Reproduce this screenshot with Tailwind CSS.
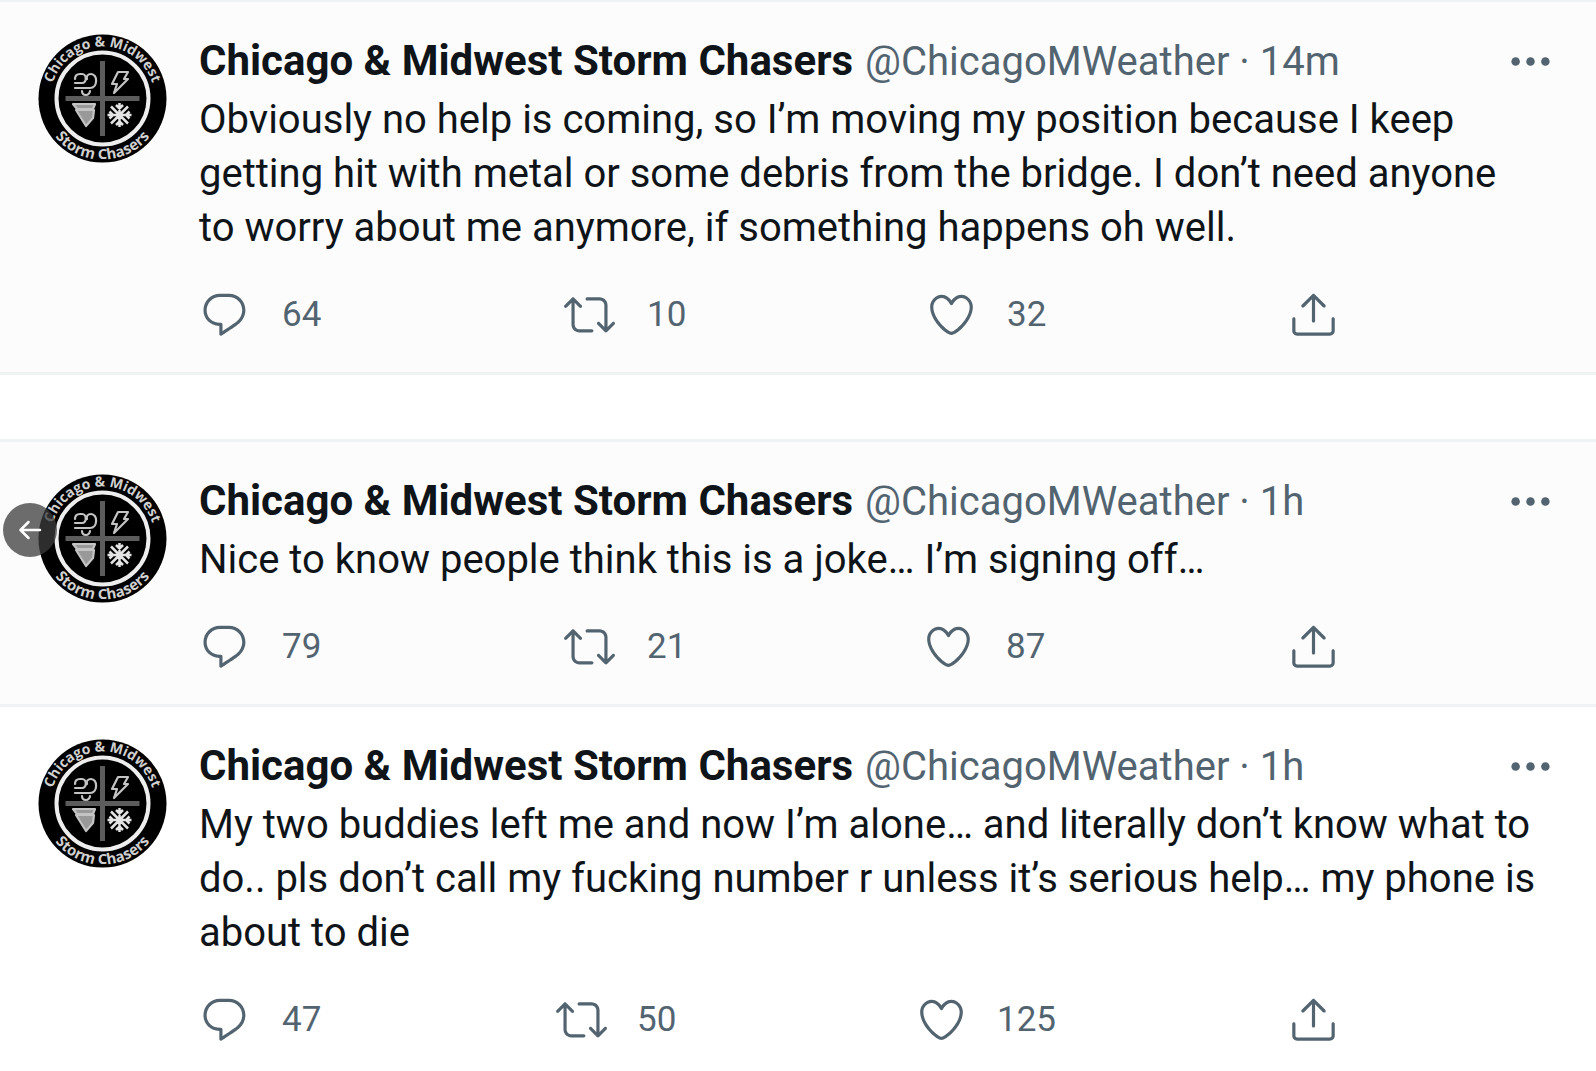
<!DOCTYPE html>
<html lang="en">
<head>
<meta charset="utf-8">
<meta name="viewport" content="width=device-width, initial-scale=1">
<title>Chicago &amp; Midwest Storm Chasers</title>
<script src="https://cdn.jsdelivr.net/npm/@tailwindcss/browser@4"></script>
</head>
<body class="relative bg-white font-['Roboto','Liberation_Sans',sans-serif] text-[40px] leading-[54px] text-[#0f1419]">

<svg class="hidden" aria-hidden="true">
  <defs>
    <path id="arc-top" d="M12.5 64.5a52 52 0 0 1 104 0"/>
    <path id="arc-bottom" d="M3.5 64.5a61 61 0 0 0 122 0"/>
    <symbol id="avatar" viewBox="0 0 129 129">
      <circle cx="64.5" cy="64.5" r="64" fill="#000"/>
      <circle cx="64.5" cy="64.5" r="46" fill="none" stroke="#eee" stroke-width="4"/>
      <path d="M64.5 27v75M27.500 64.500h74" stroke="#5c5c5c" stroke-width="5" fill="none"/>
      <g fill="none" stroke="#c4c4c4" stroke-width="2.200" stroke-linecap="round" stroke-linejoin="round">
        <path d="M37 49h7c5 0 5-9 0-9h-2c-3 0-5 2-5 5M37 54h15c8 0 8-14 1-14-3 0-5 2-4 5M44 57c0 3 2 4 4 4s4-2 4-4"/>
        <path d="M80 38h10l-4 7h4L76 59l3-9h-5z"/>
        <path d="M35 70h22l-2 5H39zM38 76l10 16 7-8 1-8z" fill="#999"/>
      </g>
      <path d="M81.500 69v24M69.500 81h24M73 72.500l17 17M90 72.500l-17 17M78 71l3.500 3.500 3.500-3.500M78 91l3.500-3.500 3.500 3.500M71.500 77.500l3.500 3.500-3.500 3.500M91.500 77.500l-3.500 3.500 3.500 3.500" fill="none" stroke="#e4e4e4" stroke-width="2.500"/>
      <g fill="#d0d0d0" font-family="'Open Sans',sans-serif" font-weight="700" text-anchor="middle">
        <text font-size="14"><textPath href="#arc-top" startOffset="50%">Chicago &amp; Midwest</textPath></text>
        <text font-size="15"><textPath href="#arc-bottom" startOffset="50%">Storm Chasers</textPath></text>
      </g>
    </symbol>
    <symbol id="reply" viewBox="0 0 24 24"><path d="M14.046 2.242l-4.148-.01h-.002c-4.374 0-7.800 3.427-7.800 7.802 0 4.098 3.186 7.206 7.465 7.370v3.828c0 .108.044.286.120.403.142.225.384.347.632.347.138 0 .277-.038.402-.118.264-.168 6.473-4.140 8.088-5.506 1.902-1.610 3.040-3.970 3.043-6.312v-.017c-.006-4.367-3.430-7.787-7.800-7.788zm3.787 12.972c-1.134.960-4.862 3.405-6.772 4.643V16.670c0-.414-.335-.750-.750-.750h-.396c-3.660 0-6.318-2.476-6.318-5.886 0-3.534 2.768-6.302 6.300-6.302l4.147.010h.002c3.532 0 6.300 2.766 6.302 6.296-.003 1.910-.942 3.844-2.514 5.176z"/></symbol>
    <symbol id="retweet" viewBox="0 0 24 24"><path d="M23.770 15.670c-.292-.293-.767-.293-1.060 0l-2.220 2.220V7.650c0-2.068-1.683-3.750-3.750-3.750h-5.850c-.414 0-.750.336-.750.750s.336.750.750.750h5.850c1.240 0 2.250 1.010 2.250 2.250v10.240l-2.220-2.220c-.293-.293-.768-.293-1.060 0s-.294.768 0 1.060l3.500 3.500c.145.147.337.220.530.220s.383-.072.530-.220l3.500-3.500c.294-.292.294-.767 0-1.060zm-10.660 3.280H7.260c-1.240 0-2.250-1.010-2.250-2.250V6.460l2.220 2.220c.148.147.340.220.532.220s.384-.073.530-.220c.293-.293.293-.768 0-1.060l-3.500-3.500c-.293-.294-.768-.294-1.060 0l-3.500 3.500c-.294.292-.294.767 0 1.060s.767.293 1.060 0l2.220-2.220V16.700c0 2.068 1.683 3.750 3.750 3.750h5.850c.414 0 .750-.336.750-.750s-.337-.750-.750-.750z"/></symbol>
    <symbol id="like" viewBox="0 0 24 24"><path d="M12 21.638h-.014C9.403 21.590 1.950 14.856 1.950 8.478c0-3.064 2.525-5.754 5.403-5.754 2.290 0 3.830 1.580 4.646 2.730.814-1.148 2.354-2.730 4.645-2.730 2.880 0 5.404 2.690 5.404 5.755 0 6.376-7.454 13.110-10.037 13.157H12zM7.354 4.225c-2.080 0-3.903 1.988-3.903 4.255 0 5.740 7.034 11.596 8.550 11.658 1.518-.062 8.550-5.917 8.550-11.658 0-2.267-1.823-4.255-3.903-4.255-2.528 0-3.940 2.936-3.952 2.965-.230.562-1.156.562-1.387 0-.014-.030-1.425-2.965-3.954-2.965z"/></symbol>
    <symbol id="share" viewBox="0 0 24 24"><path d="M17.530 7.470l-5-5c-.293-.293-.768-.293-1.060 0l-5 5c-.294.293-.294.768 0 1.060s.767.294 1.060 0l3.720-3.720V15c0 .414.336.750.750.750s.750-.336.750-.750V4.810l3.720 3.720c.146.147.338.220.530.220s.384-.072.530-.220c.293-.293.293-.767 0-1.060z"/><path d="M19.708 21.944H4.292C3.028 21.944 2 20.916 2 19.652V14c0-.414.336-.750.750-.750s.750.336.750.750v5.652c0 .437.355.792.792.792h15.416c.437 0 .792-.355.792-.792V14c0-.414.336-.750.750-.750s.750.336.750.750v5.652c0 1.264-1.028 2.292-2.292 2.292z"/></symbol>
    <symbol id="more" viewBox="0 0 24 24"><circle cx="5" cy="12" r="2"/><circle cx="12" cy="12" r="2"/><circle cx="19" cy="12" r="2"/></symbol>
  </defs>
</svg>

<main>
  <article class="flex gap-8 border-t-2 border-b-3 border-[#eff3f4] bg-[#fcfcfc] pr-10 pl-[38px] pt-8 pb-8">
    <a href="#" aria-label="Profile" class="shrink-0"><svg class="size-[129px]"><use href="#avatar"/></svg></a>
    <div class="min-w-0 flex-1">
      <header class="mb-1 flex items-center justify-between">
        <div class="flex items-baseline gap-3 whitespace-nowrap">
          <a href="#" class="text-[42px] font-bold">Chicago &amp; Midwest Storm Chasers</a>
          <span class="text-[#536471]"><a href="#">@ChicagoMWeather</a> · <a href="#"><time>14m</time></a></span>
        </div>
        <button type="button" aria-label="More" class="text-[#536471]"><svg class="size-[51px] fill-current"><use href="#more"/></svg></button>
      </header>
      <p>Obviously no help is coming, so I’m moving my position because I keep<br>getting hit with metal or some debris from the bridge. I don’t need anyone<br>to worry about me anymore, if something happens oh well.</p>
      <div class="mt-[34px] grid max-w-[1140px] grid-cols-[365fr_362fr_362fr_51px] text-[35px] leading-[51px] text-[#536471]">
        <button type="button" aria-label="Reply" class="flex gap-8"><svg class="size-[51px] fill-current"><use href="#reply"/></svg><span>64</span></button>
        <button type="button" aria-label="Retweet" class="flex gap-8"><svg class="size-[51px] fill-current"><use href="#retweet"/></svg><span>10</span></button>
        <button type="button" aria-label="Like" class="flex gap-[30px]"><svg class="size-[51px] fill-current"><use href="#like"/></svg><span>32</span></button>
        <button type="button" aria-label="Share"><svg class="size-[51px] fill-current"><use href="#share"/></svg></button>
      </div>
    </div>
  </article>

  <article class="mt-16 flex gap-8 border-y-3 border-[#eff3f4] bg-[#fcfcfc] pr-10 pl-[38px] pt-8 pb-8">
    <a href="#" aria-label="Profile" class="shrink-0"><svg class="size-[129px]"><use href="#avatar"/></svg></a>
    <div class="min-w-0 flex-1">
      <header class="mb-1 flex items-center justify-between">
        <div class="flex items-baseline gap-3 whitespace-nowrap">
          <a href="#" class="text-[42px] font-bold">Chicago &amp; Midwest Storm Chasers</a>
          <span class="text-[#536471]"><a href="#">@ChicagoMWeather</a> · <a href="#"><time>1h</time></a></span>
        </div>
        <button type="button" aria-label="More" class="text-[#536471]"><svg class="size-[51px] fill-current"><use href="#more"/></svg></button>
      </header>
      <p>Nice to know people think this is a joke… I’m signing off…</p>
      <div class="mt-[34px] grid max-w-[1140px] grid-cols-[365fr_359fr_365fr_51px] text-[35px] leading-[51px] text-[#536471]">
        <button type="button" aria-label="Reply" class="flex gap-8"><svg class="size-[51px] fill-current"><use href="#reply"/></svg><span>79</span></button>
        <button type="button" aria-label="Retweet" class="flex gap-8"><svg class="size-[51px] fill-current"><use href="#retweet"/></svg><span>21</span></button>
        <button type="button" aria-label="Like" class="flex gap-8"><svg class="size-[51px] fill-current"><use href="#like"/></svg><span>87</span></button>
        <button type="button" aria-label="Share"><svg class="size-[51px] fill-current"><use href="#share"/></svg></button>
      </div>
    </div>
  </article>

  <article class="flex gap-8 bg-white pr-10 pl-[38px] pt-8">
    <a href="#" aria-label="Profile" class="shrink-0"><svg class="size-[129px]"><use href="#avatar"/></svg></a>
    <div class="min-w-0 flex-1">
      <header class="mb-1 flex items-center justify-between">
        <div class="flex items-baseline gap-3 whitespace-nowrap">
          <a href="#" class="text-[42px] font-bold">Chicago &amp; Midwest Storm Chasers</a>
          <span class="text-[#536471]"><a href="#">@ChicagoMWeather</a> · <a href="#"><time>1h</time></a></span>
        </div>
        <button type="button" aria-label="More" class="text-[#536471]"><svg class="size-[51px] fill-current"><use href="#more"/></svg></button>
      </header>
      <p>My two buddies left me and now I’m alone… and literally don’t know what to<br>do.. pls don’t call my fucking number r unless it’s serious help… my phone is<br>about to die</p>
      <div class="mt-[34px] grid max-w-[1140px] grid-cols-[357fr_360fr_372fr_51px] text-[35px] leading-[51px] text-[#536471]">
        <button type="button" aria-label="Reply" class="flex gap-8"><svg class="size-[51px] fill-current"><use href="#reply"/></svg><span>47</span></button>
        <button type="button" aria-label="Retweet" class="flex gap-[30px]"><svg class="size-[51px] fill-current"><use href="#retweet"/></svg><span>50</span></button>
        <button type="button" aria-label="Like" class="flex gap-[30px]"><svg class="size-[51px] fill-current"><use href="#like"/></svg><span>125</span></button>
        <button type="button" aria-label="Share"><svg class="size-[51px] fill-current"><use href="#share"/></svg></button>
      </div>
    </div>
  </article>
</main>

<button type="button" aria-label="Previous" class="absolute top-[503px] left-[3px] flex size-[54px] items-center justify-center rounded-full bg-[#3c3c3c]/75">
  <svg class="size-6" viewBox="0 0 24 24" fill="none" stroke="#fff" stroke-width="2.500" stroke-linecap="round" stroke-linejoin="round"><path d="M22 12H3M10.500 4L2.500 12l8 8"/></svg>
</button>
</body>
</html>
